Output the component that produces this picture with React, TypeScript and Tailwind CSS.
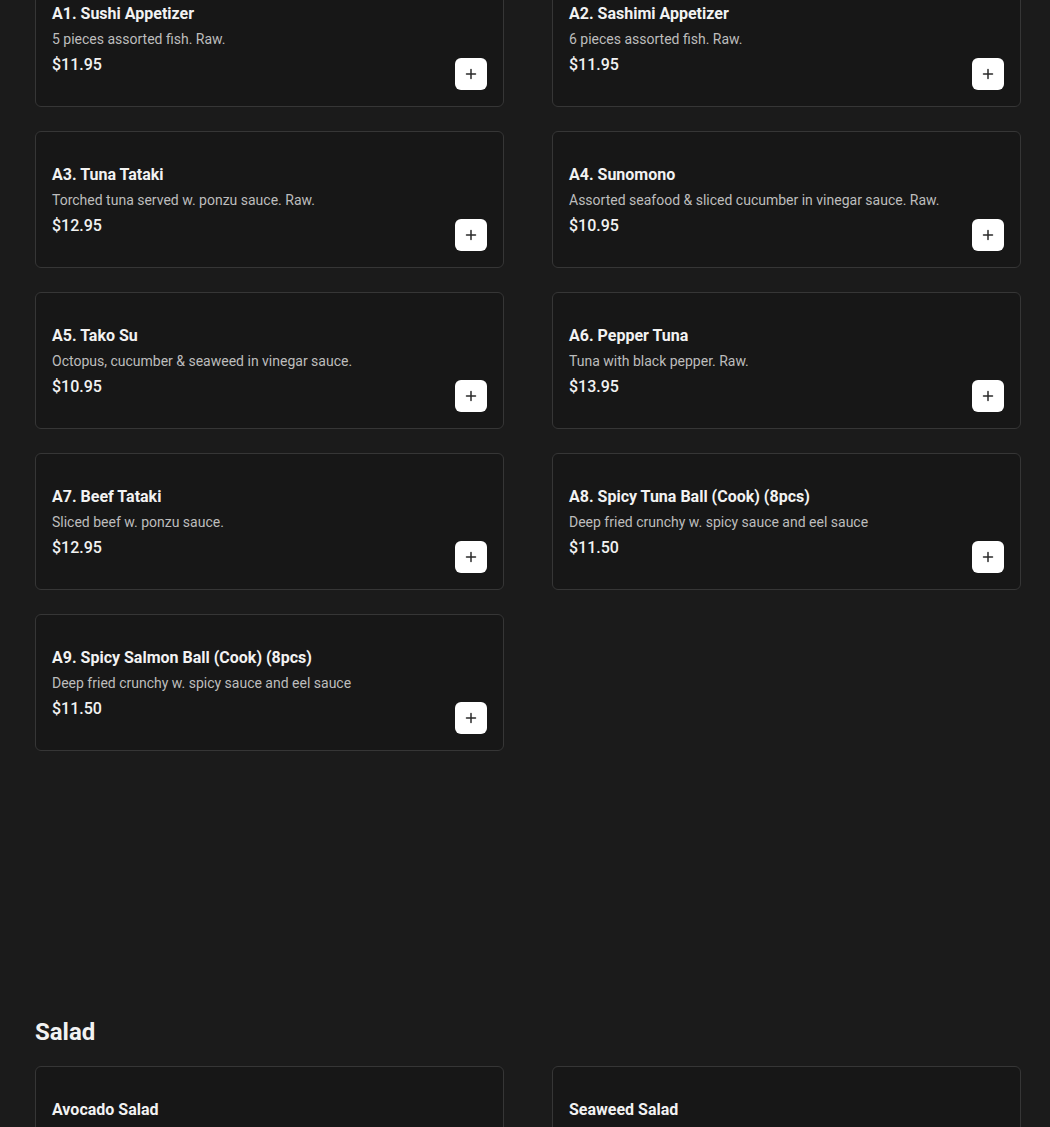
import React from "react";

type Item = { name: string; desc: string; price: string };

const appetizers: Item[] = [
  { name: "A1. Sushi Appetizer", desc: "5 pieces assorted fish. Raw.", price: "$11.95" },
  { name: "A2. Sashimi Appetizer", desc: "6 pieces assorted fish. Raw.", price: "$11.95" },
  { name: "A3. Tuna Tataki", desc: "Torched tuna served w. ponzu sauce. Raw.", price: "$12.95" },
  { name: "A4. Sunomono", desc: "Assorted seafood & sliced cucumber in vinegar sauce. Raw.", price: "$10.95" },
  { name: "A5. Tako Su", desc: "Octopus, cucumber & seaweed in vinegar sauce.", price: "$10.95" },
  { name: "A6. Pepper Tuna", desc: "Tuna with black pepper. Raw.", price: "$13.95" },
  { name: "A7. Beef Tataki", desc: "Sliced beef w. ponzu sauce.", price: "$12.95" },
  { name: "A8. Spicy Tuna Ball (Cook) (8pcs)", desc: "Deep fried crunchy w. spicy sauce and eel sauce", price: "$11.50" },
  { name: "A9. Spicy Salmon Ball (Cook) (8pcs)", desc: "Deep fried crunchy w. spicy sauce and eel sauce", price: "$11.50" },
];

const salads: Item[] = [
  { name: "Avocado Salad", desc: "", price: "" },
  { name: "Seaweed Salad", desc: "", price: "" },
];

function PlusButton() {
  return (
    <button className="w-8 h-8 rounded-md bg-white flex items-center justify-center shrink-0">
      <svg width="12" height="12" viewBox="0 0 12 12" fill="none">
        <path d="M6 1.5v9M1.5 6h9" stroke="#2a2a2a" strokeWidth="1.5" strokeLinecap="round" />
      </svg>
    </button>
  );
}

function Card({ item }: { item: Item }) {
  return (
    <div className="h-[137px] rounded-md border border-[#363636] bg-[#171717] flex items-end justify-between p-4 pt-[31px]">
      <div className="self-start flex flex-col">
        <div className="text-[16px] leading-6 font-bold text-[#f2f2f2]">{item.name}</div>
        <div className="text-[14px] leading-5 mt-[3px] text-[#bdbdbd]">{item.desc}</div>
        <div className="text-[16px] leading-6 mt-[4px] font-medium text-[#f2f2f2]">{item.price}</div>
      </div>
      <PlusButton />
    </div>
  );
}

export default function App() {
  return (
    <div
      className="min-h-[1127px] bg-[#1b1b1b] overflow-hidden pl-[35px] pr-[29px]"
      style={{ fontFamily: "Roboto, 'Noto Sans', sans-serif" }}
    >
      <div className="-mt-[30px] grid grid-cols-2 gap-x-[48px] gap-y-[24px]">
        {appetizers.map((it) => (
          <Card key={it.name} item={it} />
        ))}
      </div>
      <h2 className="mt-[265px] text-[24px] leading-8 font-bold text-[#f2f2f2]">Salad</h2>
      <div className="mt-[18px] grid grid-cols-2 gap-x-[48px] gap-y-[24px]">
        {salads.map((it) => (
          <Card key={it.name} item={it} />
        ))}
      </div>
    </div>
  );
}
